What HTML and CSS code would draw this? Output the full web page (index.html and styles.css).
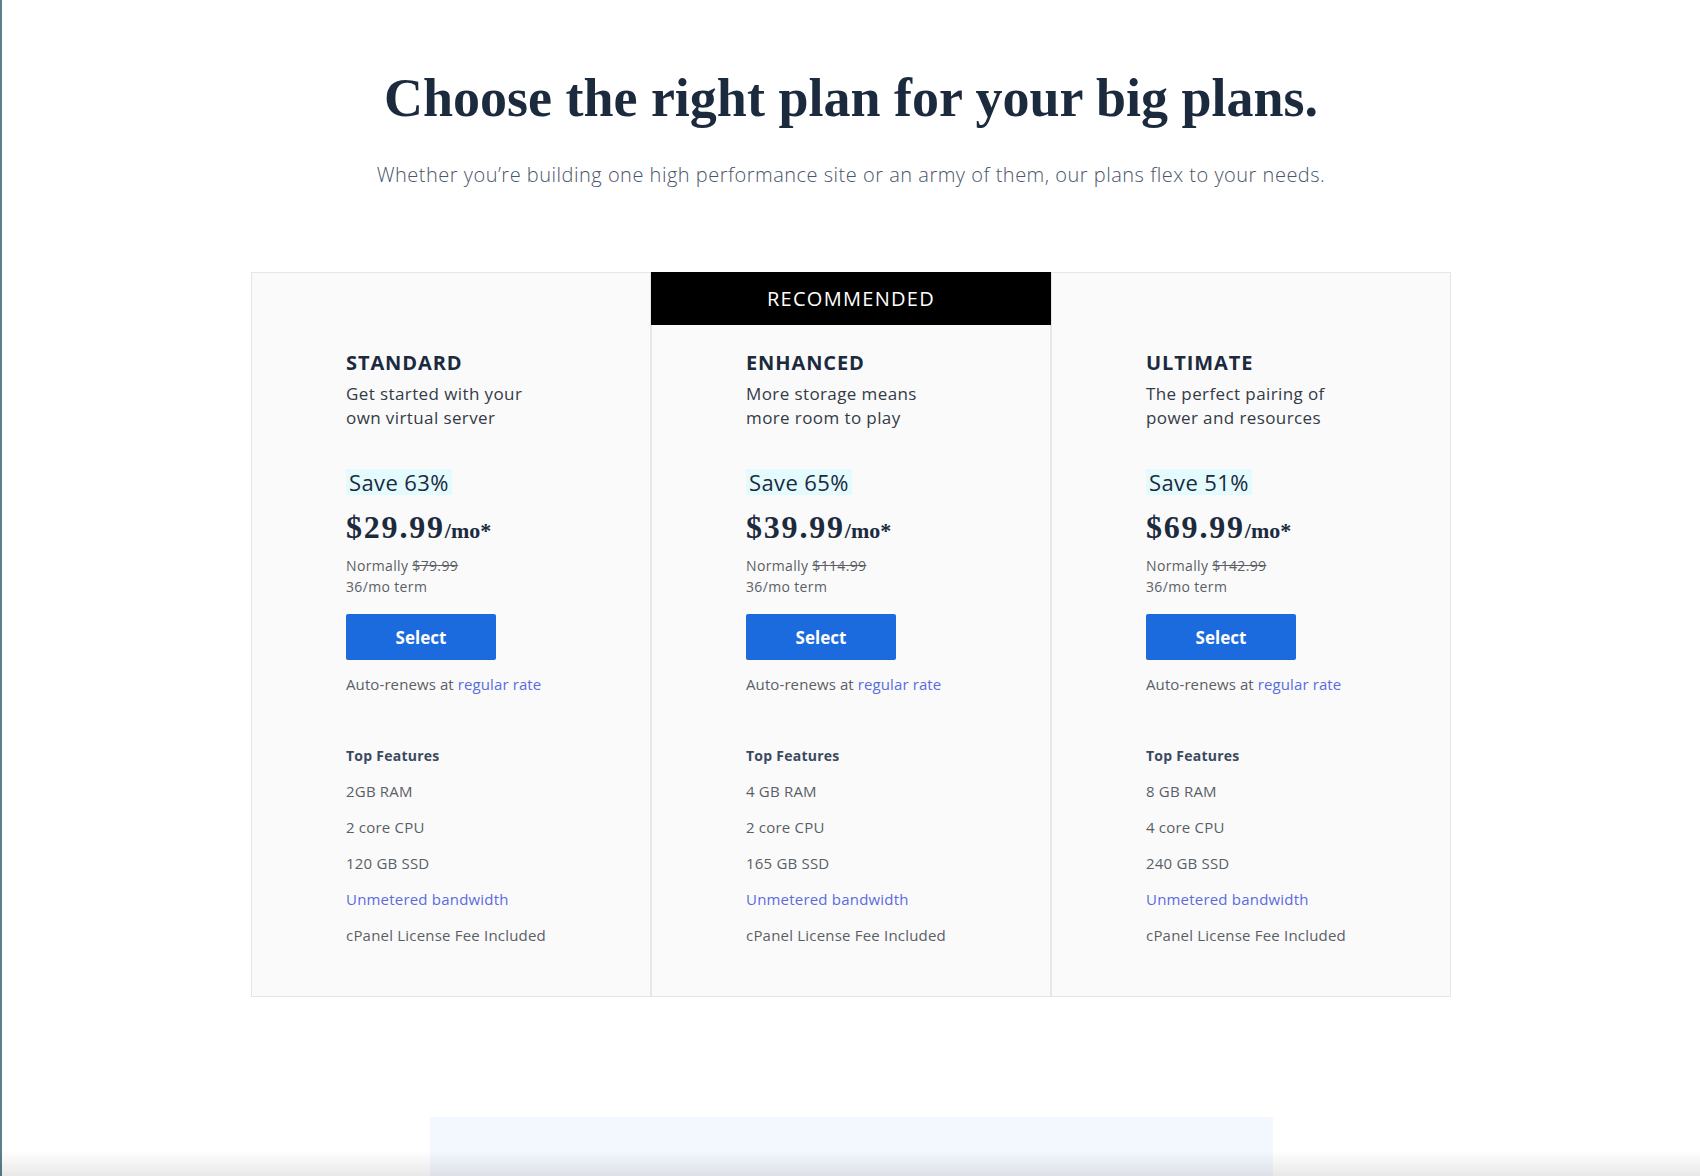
FILE: index.html
```html
<!DOCTYPE html>
<html lang="en">
<head>
<meta charset="utf-8">
<title>Choose the right plan</title>
<link rel="stylesheet" href="styles.css">
</head>
<body>
<main class="page">
  <header class="hero">
    <h1 class="hero-title">Choose the right plan for your big plans.</h1>
    <p class="hero-sub">Whether you’re building one high performance site or an army of them, our plans flex to your needs.</p>
  </header>

  <section class="plans">
    <article class="plan">
      <div class="plan-top"></div>
      <div class="plan-body">
        <h2 class="plan-name">STANDARD</h2>
        <p class="plan-desc">Get started with your own virtual server</p>
        <span class="plan-save">Save 63%</span>
        <div class="plan-price">$29.99<span class="plan-unit">/mo*</span></div>
        <p class="plan-meta">Normally <s>$79.99</s><br>36/mo term</p>
        <a class="plan-btn" href="#">Select</a>
        <p class="plan-renew">Auto-renews at <a class="link" href="#">regular rate</a></p>
        <h3 class="feat-title">Top Features</h3>
        <ul class="feat-list">
          <li>2GB RAM</li>
          <li>2 core CPU</li>
          <li>120 GB SSD</li>
          <li class="link">Unmetered bandwidth</li>
          <li>cPanel License Fee Included</li>
        </ul>
      </div>
    </article>

    <article class="plan">
      <div class="plan-top plan-top--rec">RECOMMENDED</div>
      <div class="plan-body">
        <h2 class="plan-name">ENHANCED</h2>
        <p class="plan-desc">More storage means more room to play</p>
        <span class="plan-save">Save 65%</span>
        <div class="plan-price">$39.99<span class="plan-unit">/mo*</span></div>
        <p class="plan-meta">Normally <s>$114.99</s><br>36/mo term</p>
        <a class="plan-btn" href="#">Select</a>
        <p class="plan-renew">Auto-renews at <a class="link" href="#">regular rate</a></p>
        <h3 class="feat-title">Top Features</h3>
        <ul class="feat-list">
          <li>4 GB RAM</li>
          <li>2 core CPU</li>
          <li>165 GB SSD</li>
          <li class="link">Unmetered bandwidth</li>
          <li>cPanel License Fee Included</li>
        </ul>
      </div>
    </article>

    <article class="plan">
      <div class="plan-top"></div>
      <div class="plan-body">
        <h2 class="plan-name">ULTIMATE</h2>
        <p class="plan-desc">The perfect pairing of power and resources</p>
        <span class="plan-save">Save 51%</span>
        <div class="plan-price">$69.99<span class="plan-unit">/mo*</span></div>
        <p class="plan-meta">Normally <s>$142.99</s><br>36/mo term</p>
        <a class="plan-btn" href="#">Select</a>
        <p class="plan-renew">Auto-renews at <a class="link" href="#">regular rate</a></p>
        <h3 class="feat-title">Top Features</h3>
        <ul class="feat-list">
          <li>8 GB RAM</li>
          <li>4 core CPU</li>
          <li>240 GB SSD</li>
          <li class="link">Unmetered bandwidth</li>
          <li>cPanel License Fee Included</li>
        </ul>
      </div>
    </article>
  </section>

  <section class="next-panel"></section>
</main>
<div class="bottom-fade"></div>
</body>
</html>
```

FILE: styles.css
```css
* { box-sizing: border-box; }

html, body { height: 100%; }

body {
  margin: 0;
  border-left: 2px solid #5d7f89;
  background: #ffffff;
  font-family: "Open Sans", "Noto Sans", sans-serif;
  color: #333b47;
  overflow: hidden;
}

.page {
  display: flex;
  flex-direction: column;
  align-items: center;
}

.hero {
  display: flex;
  flex-direction: column;
  align-items: center;
  padding-top: 66px;
}

.hero-title {
  margin: 0;
  font-family: "Liberation Serif", "Times New Roman", serif;
  font-weight: 700;
  font-size: 54px;
  line-height: 64px;
  color: #1c2a3e;
}

.hero-sub {
  margin: 31px 0 0;
  font-size: 20px;
  line-height: 28px;
  font-weight: 300;
  letter-spacing: 0.5px;
  color: #4a5568;
}

.plans {
  margin-top: 83px;
  display: flex;
}

.plan {
  width: 400px;
  background: #fafafa;
  border: 1px solid #e6e6e6;
  display: flex;
  flex-direction: column;
}

.plan-top {
  height: 52px;
}

.plan-top--rec {
  margin: -1px -1px 0 -1px;
  height: 53px;
  background: #000;
  color: #fff;
  display: flex;
  align-items: center;
  justify-content: center;
  font-size: 20px;
  letter-spacing: 1.3px;
}

.plan-body {
  padding: 26px 40px 50px 94px;
  display: flex;
  flex-direction: column;
  align-items: flex-start;
}

.plan-name {
  margin: 0;
  font-size: 20px;
  line-height: 24px;
  font-weight: 700;
  color: #1c2a3e;
  letter-spacing: 0.9px;
}

.plan-desc {
  margin: 7px 0 0;
  max-width: 205px;
  font-size: 17px;
  line-height: 24px;
  letter-spacing: 0.4px;
  color: #333b47;
}

.plan-save {
  margin-top: 39px;
  display: inline-block;
  padding: 0 3px;
  background: #e4fbfd;
  font-size: 22px;
  line-height: 26px;
  font-weight: 500;
  letter-spacing: 0.4px;
  color: #1c2a3e;
}

.plan-price {
  margin-top: 12px;
  font-family: "Liberation Serif", "Times New Roman", serif;
  font-weight: 700;
  font-size: 32px;
  line-height: 40px;
  letter-spacing: 1.8px;
  color: #1c2a3e;
}

.plan-unit {
  font-size: 22px;
  letter-spacing: 0;
}

.plan-meta {
  margin: 4px 0 0;
  font-size: 14px;
  line-height: 21px;
  letter-spacing: 0.35px;
  color: #5a5f66;
}

.plan-btn {
  margin-top: 17px;
  width: 150px;
  height: 46px;
  display: flex;
  align-items: center;
  justify-content: center;
  background: #1c6bde;
  color: #fff;
  border-radius: 2px;
  font-size: 17px;
  font-weight: 700;
  text-decoration: none;
}

.plan-renew {
  margin: 13px 0 0;
  font-size: 15px;
  line-height: 22px;
  letter-spacing: 0.1px;
  color: #5a5f66;
}

.link {
  color: #5a6be0;
  text-decoration: none;
}

.feat-title {
  margin: 50px 0 0;
  font-size: 14px;
  line-height: 22px;
  font-weight: 700;
  letter-spacing: 0.25px;
  color: #3b4a5e;
}

.feat-list {
  margin: 13px 0 0;
  padding: 0;
  list-style: none;
  display: flex;
  flex-direction: column;
  gap: 14px;
  font-size: 15px;
  line-height: 22px;
  letter-spacing: 0.2px;
  color: #5a5f66;
}

.next-panel {
  margin-top: 120px;
  width: 843px;
  height: 80px;
  background: #f3f7fe;
}

.bottom-fade {
  position: fixed;
  left: 0;
  right: 0;
  bottom: 0;
  height: 26px;
  background: linear-gradient(to bottom, rgba(0,0,0,0), rgba(0,0,0,0.09));
  pointer-events: none;
}
```
